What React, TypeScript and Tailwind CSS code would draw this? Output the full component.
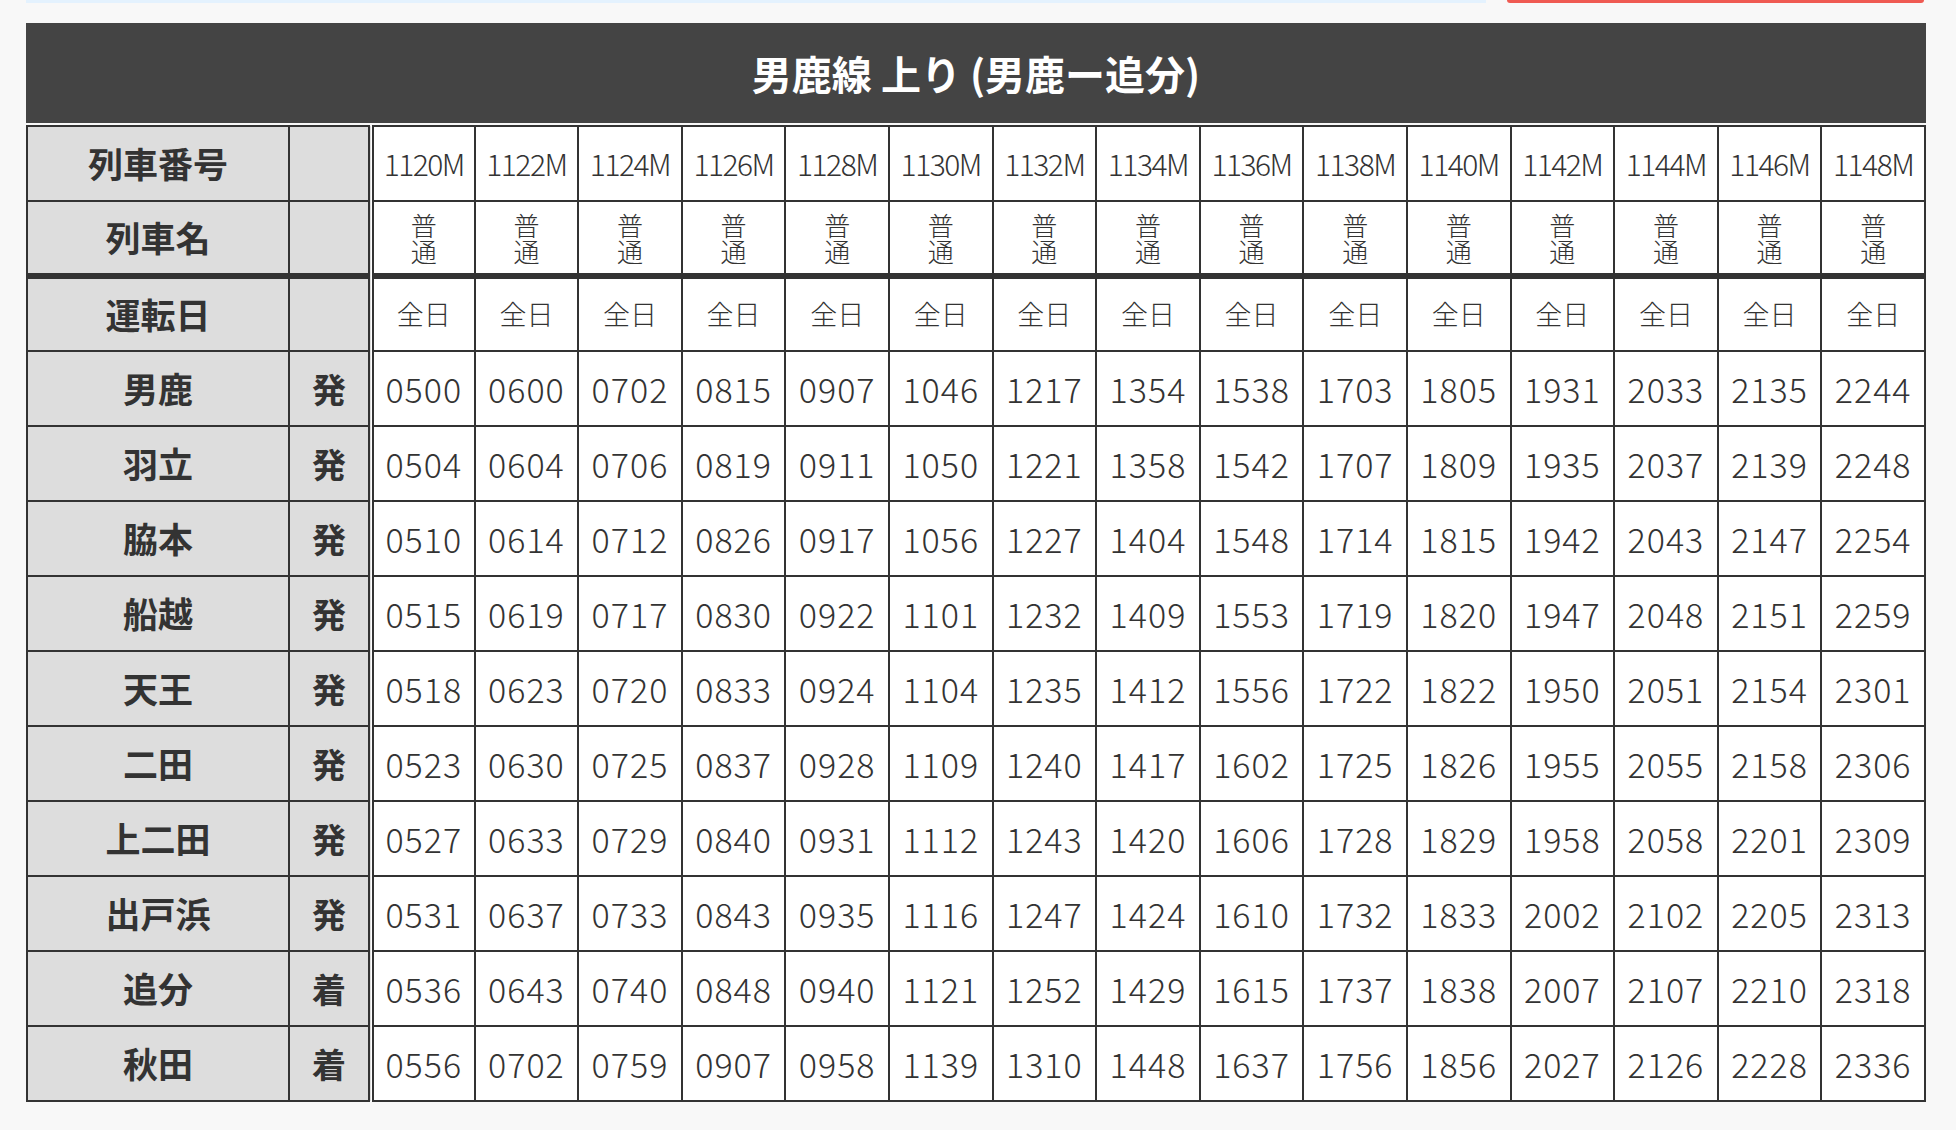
const trains = [
  "1120M", "1122M", "1124M", "1126M", "1128M", "1130M", "1132M", "1134M",
  "1136M", "1138M", "1140M", "1142M", "1144M", "1146M", "1148M",
];

const stops: { name: string; kind: string; times: string[] }[] = [
  { name: "男鹿", kind: "発", times: "0500 0600 0702 0815 0907 1046 1217 1354 1538 1703 1805 1931 2033 2135 2244".split(" ") },
  { name: "羽立", kind: "発", times: "0504 0604 0706 0819 0911 1050 1221 1358 1542 1707 1809 1935 2037 2139 2248".split(" ") },
  { name: "脇本", kind: "発", times: "0510 0614 0712 0826 0917 1056 1227 1404 1548 1714 1815 1942 2043 2147 2254".split(" ") },
  { name: "船越", kind: "発", times: "0515 0619 0717 0830 0922 1101 1232 1409 1553 1719 1820 1947 2048 2151 2259".split(" ") },
  { name: "天王", kind: "発", times: "0518 0623 0720 0833 0924 1104 1235 1412 1556 1722 1822 1950 2051 2154 2301".split(" ") },
  { name: "二田", kind: "発", times: "0523 0630 0725 0837 0928 1109 1240 1417 1602 1725 1826 1955 2055 2158 2306".split(" ") },
  { name: "上二田", kind: "発", times: "0527 0633 0729 0840 0931 1112 1243 1420 1606 1728 1829 1958 2058 2201 2309".split(" ") },
  { name: "出戸浜", kind: "発", times: "0531 0637 0733 0843 0935 1116 1247 1424 1610 1732 1833 2002 2102 2205 2313".split(" ") },
  { name: "追分", kind: "着", times: "0536 0643 0740 0848 0940 1121 1252 1429 1615 1737 1838 2007 2107 2210 2318".split(" ") },
  { name: "秋田", kind: "着", times: "0556 0702 0759 0907 0958 1139 1310 1448 1637 1756 1856 2027 2126 2228 2336".split(" ") },
];

const label = "border-2 border-[#333] bg-[#dddddd] text-center text-[35px] font-bold";
// right edge of the 発/着 column is the double rule
const kindCell =
  "border-2 border-r-[6px] border-[#333] [border-right-style:double] bg-[#dddddd] text-center text-[34px] font-bold";
const cell = "border-2 border-[#333] bg-white text-center font-light";

export default function App() {
  return (
    <div className="min-h-screen bg-[#f8f8f8] px-[26px] pb-8 font-['Noto_Sans_CJK_JP',sans-serif] text-[#333]">
      <div className="flex h-[3px] w-[1900px] gap-[21px]">
        <div className="flex-1 bg-[#e4f2fe]" />
        <div className="mr-[2px] w-[417px] rounded-b-[4px] bg-[#ef5a52]" />
      </div>

      <div className="mt-[20px] flex h-[100px] w-[1900px] items-center justify-center bg-[#444]">
        <h2 className="text-[40px] font-bold text-white">男鹿線 上り (男鹿ー追分)</h2>
      </div>

      <table className="mt-[2px] w-[1900px] table-fixed border-collapse">
        <colgroup>
          <col className="w-[262px]" />
          <col className="w-[82px]" />
          {trains.map((t) => (
            <col key={t} />
          ))}
        </colgroup>
        <tbody>
          <tr className="h-[75px]">
            <th className={label}>列車番号</th>
            <th className={kindCell}></th>
            {trains.map((t) => (
              <td key={t} className={`${cell} text-[30px] tracking-[-1.5px]`}>
                {t}
              </td>
            ))}
          </tr>
          <tr className="h-[75px]">
            <th className={`${label} border-b-[6px]`}>列車名</th>
            <th className={`${kindCell} border-b-[6px]`}></th>
            {trains.map((t) => (
              <td key={t} className={`${cell} border-b-[6px] text-[26px] leading-[26px]`}>
                普<br />通
              </td>
            ))}
          </tr>
          <tr className="h-[75px]">
            <th className={label}>運転日</th>
            <th className={kindCell}></th>
            {trains.map((t) => (
              <td key={t} className={`${cell} text-[27px]`}>
                全日
              </td>
            ))}
          </tr>
          {stops.map((s) => (
            <tr key={s.name} className="h-[75px]">
              <th className={label}>{s.name}</th>
              <th className={kindCell}>{s.kind}</th>
              {s.times.map((t, i) => (
                <td key={i} className={`${cell} text-[34px] tracking-[1px]`}>
                  {t}
                </td>
              ))}
            </tr>
          ))}
        </tbody>
      </table>
    </div>
  );
}
